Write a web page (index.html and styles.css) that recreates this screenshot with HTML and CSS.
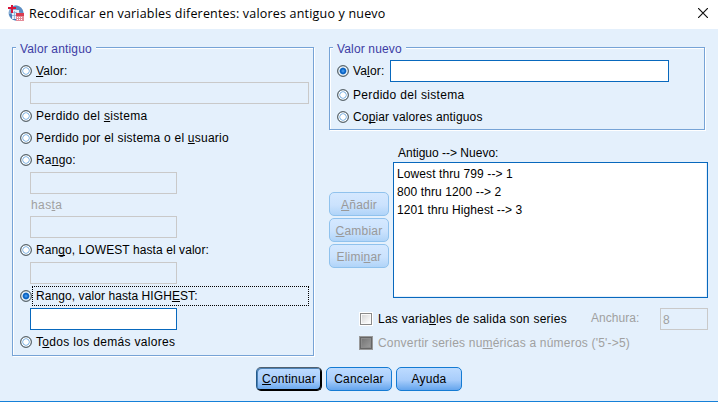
FILE: index.html
```html
<!DOCTYPE html>
<html lang="es">
<head>
<meta charset="utf-8">
<title>Recodificar en variables diferentes</title>
<link rel="stylesheet" href="styles.css">
</head>
<body>
<div class="window">
  <header class="titlebar">
    <svg class="app-icon" width="17" height="17" viewBox="0 0 17 17">
      <circle cx="8" cy="8" r="7.500" fill="#86acd4"/>
      <path d="M5 1Q10 -1 14 4Q15.500 6 15.500 9L11 7L8 4Z" fill="#5b8cc2"/>
      <path d="M1 9Q3 15 8 15.500V13L3 9Z" fill="#4479b5"/>
      <path d="M4 5h7v3H8v6H4z" fill="#e6eff8"/>
      <path d="M4 7.500h5M4 10.500h4M6.500 6v8" stroke="#86acd4" stroke-width=".8"/>
      <path d="M0 3h8M4 0v8" stroke="#d81438" stroke-width="2"/>
      <rect x="8" y="8" width="8" height="8" fill="#e58c98"/>
      <rect x="8" y="8" width="8" height="3" fill="#d83c50"/>
      <path d="M9 12.500h6M9 14.500h6" stroke="#fff" stroke-dasharray="1 1"/>
    </svg>
    <h1 class="title">Recodificar en variables diferentes: valores antiguo y nuevo</h1>
    <svg class="close" width="10" height="10" viewBox="0 0 10 10"><path d="M0 0L10 10M10 0L0 10" stroke="#111" stroke-width="1.200"/></svg>
  </header>
  <main class="content">
    <section class="group old">
      <h2 class="legend"><span class="t1">Valor antiguo</span></h2>
      <label class="row"><i class="radio"></i><span class="t2"><u>V</u>alor:</span></label>
      <div class="field wide"></div>
      <label class="row gap"><i class="radio"></i><span class="t3">Perdido del <u>s</u>istema</span></label>
      <label class="row"><i class="radio"></i><span class="t4">Perdido por el sistema o el <u>u</u>suario</span></label>
      <label class="row"><i class="radio"></i><span class="t5">Ra<u>n</u>go:</span></label>
      <div class="field gap"></div>
      <div class="row until"><span class="t6">has<u>t</u>a</span></div>
      <div class="field"></div>
      <label class="row gap"><i class="radio"></i><span class="t7">Ran<u>g</u>o, LOWEST hasta el valor:</span></label>
      <div class="field gap"></div>
      <label class="row gap"><i class="radio on"></i><span class="focus"><span class="t8">Rango, valor hasta HIGH<u>E</u>ST:</span></span></label>
      <div class="field gap active"></div>
      <label class="row gap"><i class="radio"></i><span class="t9">T<u>o</u>dos los demás valores</span></label>
    </section>
    <div class="right">
      <section class="group new">
        <h2 class="legend"><span class="t1">Valor nuevo</span></h2>
        <div class="row"><i class="radio on"></i><span class="t11">Va<u>l</u>or:</span><div class="field active value"></div></div>
        <label class="row second"><i class="radio"></i><span class="t3">Perdido del sistema</span></label>
        <label class="row"><i class="radio"></i><span class="t12">Co<u>p</u>iar valores antiguos</span></label>
      </section>
      <div class="mapping">
        <div class="actions">
          <button class="side" disabled><span><u>A</u>ñadir</span></button>
          <button class="side" disabled><span><u>C</u>ambiar</span></button>
          <button class="side" disabled><span>Elimi<u>n</u>ar</span></button>
        </div>
        <div class="listing">
          <div class="caption"><span class="t13">Antiguo --&gt; Nuevo:</span></div>
          <ul class="list">
            <li>Lowest thru 799 --&gt; 1</li>
            <li>800 thru 1200 --&gt; 2</li>
            <li>1201 thru Highest --&gt; 3</li>
          </ul>
        </div>
      </div>
      <div class="option first"><i class="check"></i><span class="t14">Las varia<u>b</u>les de salida son series</span><span class="width-label"><span class="t15">Anchura:</span></span><div class="field num">8</div></div>
      <div class="option off"><i class="check dark"></i><span class="t16">Convertir series nu<u>m</u>éricas a números ('5'-&gt;5)</span></div>
    </div>
  </main>
  <footer class="buttons">
    <button class="cmd default"><span><u>C</u>ontinuar</span></button>
    <button class="cmd"><span>Cancelar</span></button>
    <button class="cmd"><span>Ayuda</span></button>
  </footer>
</div>
</body>
</html>
```

FILE: styles.css
```css
* { box-sizing: border-box; }
body { margin: 0; font: 12px/14px "Liberation Sans", Arial, sans-serif; color: #000; letter-spacing: 0.2px; white-space: nowrap; }
.window { width: 718px; height: 402px; display: flex; flex-direction: column; background: #e4f0fc; border-bottom: 1px solid #1680d8; overflow: hidden; }
.titlebar { height: 29px; flex: none; display: flex; align-items: flex-start; background: #fff; padding: 5px 10px 0 8px; }
.title { margin: 0 0 0 4px; font: 12.5px/18px "Open Sans", sans-serif; letter-spacing: 0.19px; }
.close { margin: 3px 0 0 auto; }
.content { display: flex; height: 338px; flex: none; padding: 18px 10px 0 12px; align-items: flex-start; }
.group { border: 1px solid #76a3d6; box-shadow: 1px 1px 0 #fff, inset 1px 1px 0 #fff; }
.old { width: 302px; height: 309px; padding-left: 7px; }
.right { margin-left: 15px; width: 379px; }
.new { width: 376px; height: 83px; padding-left: 7px; }
.legend { margin: -6px 0 0 -8px; padding: 0 4px; width: fit-content; height: 18px; font: inherit; color: #3c3ca4; }
.legend span { background: #e4f0fc; box-shadow: -4px 0 #e4f0fc, 4px 0 #e4f0fc; margin-left: 4px; }
.t1, .t2, .t11, .t12 { letter-spacing: 0.15px; }
.t3, .t9 { letter-spacing: 0.32px; }
.t4 { letter-spacing: 0.23px; }
.t6 { letter-spacing: 0.4px; }
.t7, .t8 { letter-spacing: 0.08px; }
.t13 { letter-spacing: 0; }
.t14 { letter-spacing: 0.26px; }
.t15 { letter-spacing: 0.03px; }
u { text-decoration: underline 1px; text-underline-offset: 1px; text-decoration-skip-ink: none; }
.row { height: 22px; display: flex; align-items: center; }
.gap { margin-top: 1px; }
.radio { flex: none; width: 12px; height: 12px; margin: 0 4px 1px 0; border-radius: 50%; border: 1px solid #59656c; background: radial-gradient(circle, #fff 0 2.4px, #8dbbe5 3px 3.4px, #fff 4px 4.3px, #8b969d 5px); }
.radio.on { background: radial-gradient(circle, #3d91e8 0 1px, #0a63c3 2px 2.8px, #e2edf5 3.8px 4.3px, #8b969d 5px); }
.field { width: 147px; height: 22px; border: 1px solid #c9c9c9; margin-left: 10px; }
.wide { width: 279px; }
.active { border-color: #0868bd; background: #fff; }
.until { padding-left: 11px; color: #a0a0a0; }
.focus { flex: none; width: 277px; height: 20px; margin: 0 0 0 -4px; padding: 2px 0 0 3px; border: 1px dotted #000; }
.t11 { width: 31px; }
.value { width: 279px; margin-left: 6px; }
.second { margin-top: 2px; }
.mapping { display: flex; margin-top: 16px; }
.actions { width: 60px; padding-top: 46px; display: grid; row-gap: 2px; align-content: start; }
button { font: inherit; letter-spacing: inherit; display: flex; align-items: center; justify-content: center; height: 24px; padding: 0; border-radius: 5px; border: 1px solid #147bd3; background: linear-gradient(#bddbff, #a8cdfb 55%, #64a5ed); color: #000; }
.side { width: 60px; padding-top: 1px; border-color: #90c2ed; background: linear-gradient(#d5e8ff, #cbe2fd 55%, #b0d4f8); color: #999; }
.listing { margin-left: 4px; }
.caption { height: 16px; padding-left: 5px; line-height: 14px; }
.list { margin: 0; padding: 2px 3px; list-style: none; width: 315px; height: 136px; background: #fff; border: 1px solid #0868bd; box-shadow: inset -1px -1px #e4f0fc; line-height: 18px; letter-spacing: 0.1px; }
.option { display: flex; align-items: center; height: 24px; padding-left: 30px; }
.first { margin-top: 9px; }
.check { flex: none; width: 14px; height: 14px; margin: 0 5px 1px 0; border: 1px solid #fff; background: linear-gradient(135deg, #d7d7d7, #fff) 2px 2px / 8px 8px no-repeat #fafafa; box-shadow: inset 0 0 0 1px #8a8a8a; }
.dark { border-color: #999; background: linear-gradient(135deg, #777, #999) 2px 2px / 8px 8px no-repeat #8c8c8c; box-shadow: inset 0 0 0 1px #666; }
.off { color: #a0a0a0; }
.width-label { color: #a0a0a0; width: 69px; margin: 0 0 2px auto; }
.num { flex: none; width: 48px; margin-left: 0; padding: 4px 2px; color: #a0a0a0; }
.buttons { display: flex; gap: 4px; padding-left: 256px; }
.cmd { width: 66px; }
.default { border-color: #50606f #000 #000 #235a8c; box-shadow: inset -1px -1px #000, inset 1px 1px #4d82b5; }
```
